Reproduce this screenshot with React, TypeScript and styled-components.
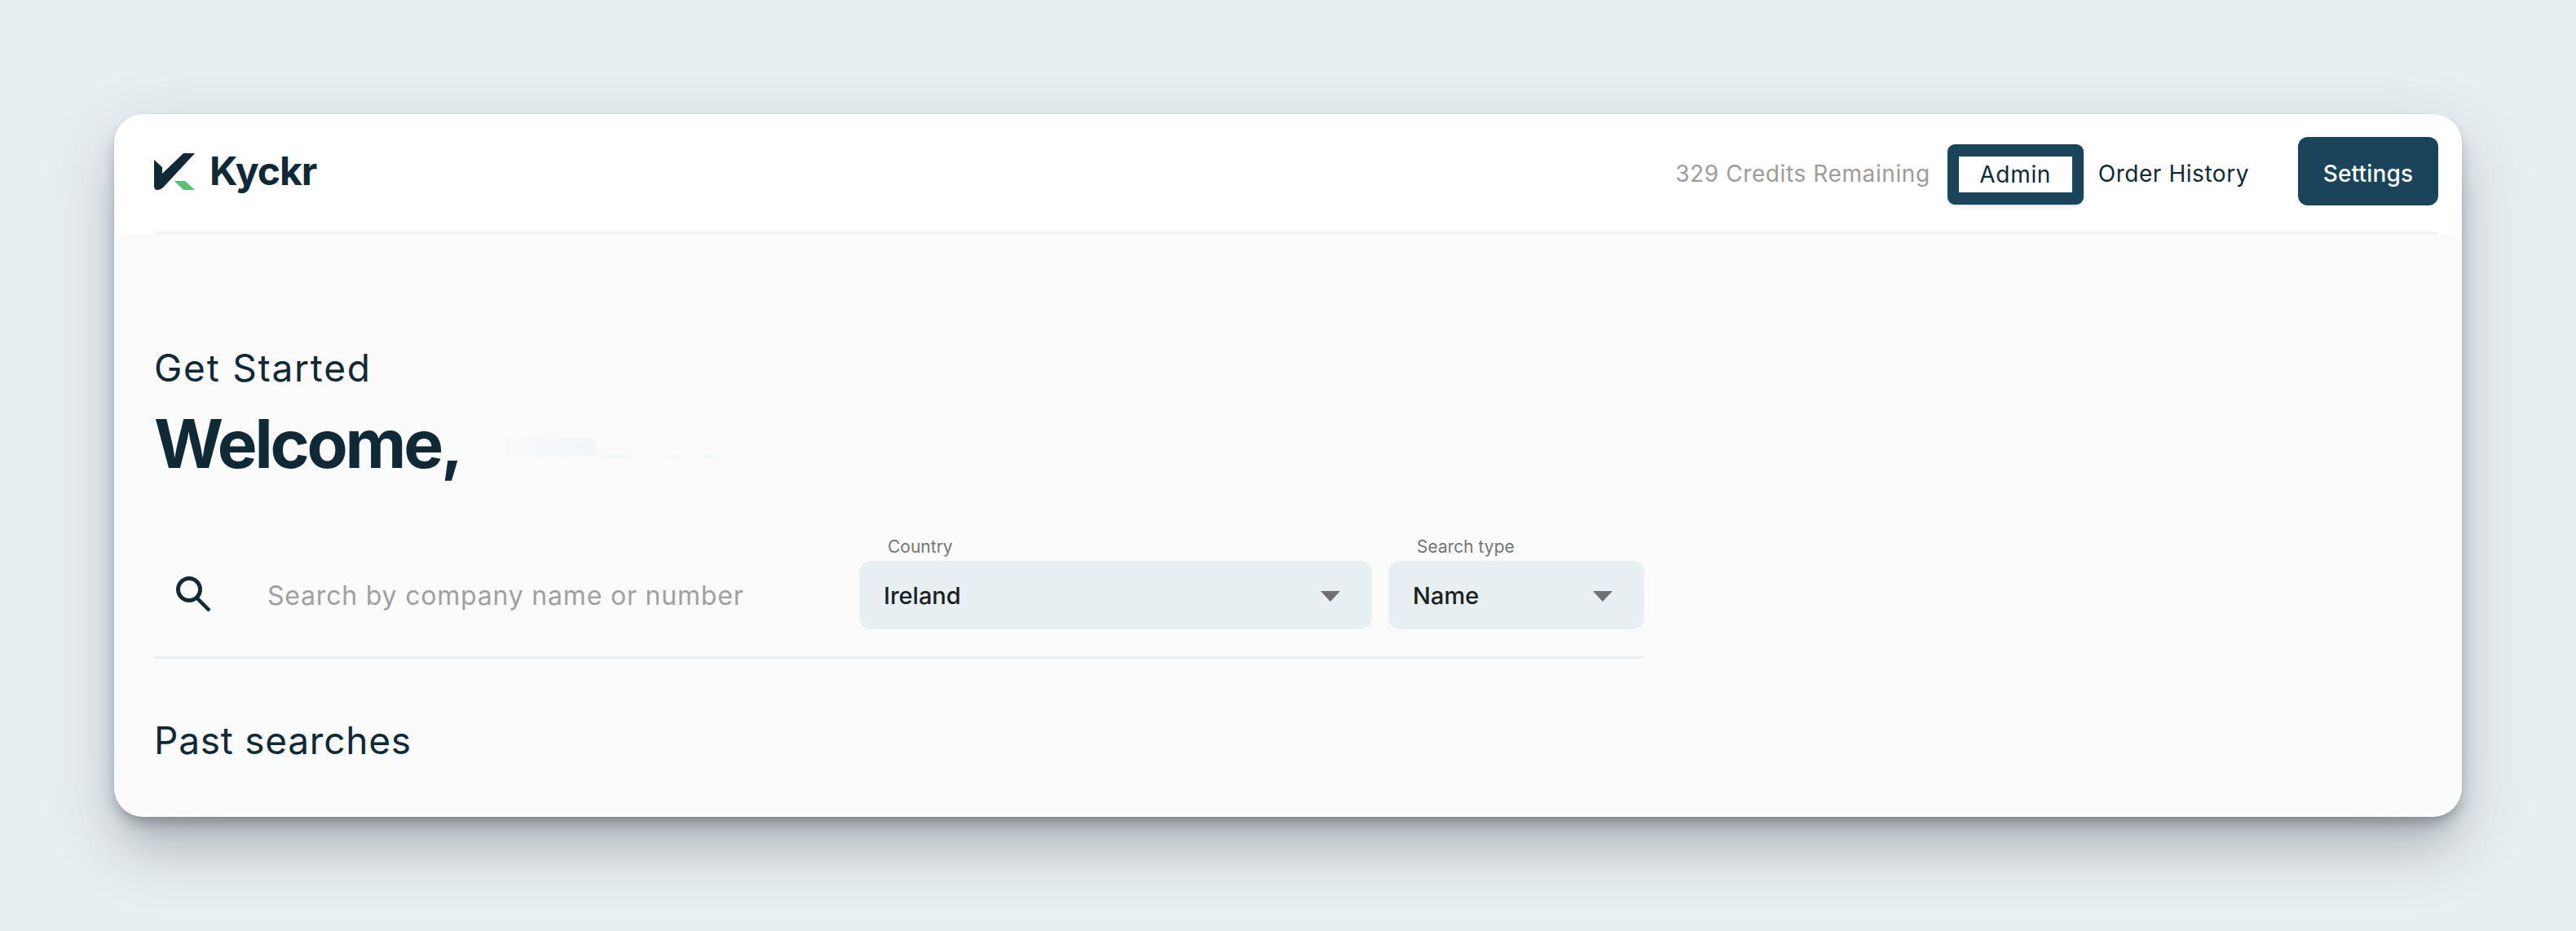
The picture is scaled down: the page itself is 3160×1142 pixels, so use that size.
import React from 'react';
import styled, { createGlobalStyle } from 'styled-components';

const GlobalStyle = createGlobalStyle`
    html, body {
        margin: 0;
        padding: 0;
        background: #e8eff2;
        font-family: Inter, "Liberation Sans", sans-serif;
    }
`;

const Page = styled.div`
    width: 3160px;
    height: 1142px;
    padding: 140px 140px 0;
    box-sizing: border-box;
    overflow: hidden;
`;

const Card = styled.main`
    width: 2880px;
    height: 862px;
    border-radius: 36px;
    background: #fbfbfb;
    overflow: hidden;
`;

const CardShadow = styled.div`
    border-radius: 36px;
    box-shadow:
        0 30px 90px rgba(30, 45, 55, 0.16),
        0 44px 60px -12px rgba(30, 45, 55, 0.2),
        0 10px 18px -4px rgba(20, 30, 35, 0.35);
`;

const Header = styled.header`
    background: #fff;
    padding: 0 29px 0 49px;
`;

const HeaderInner = styled.div`
    display: flex;
    align-items: center;
    justify-content: space-between;
    height: 144px;
    border-bottom: 3px solid #f3f4f4;
`;

const Brand = styled.div`
    display: flex;
    align-items: center;
    gap: 18px;
    margin-top: -4px;
`;

const BrandName = styled.span`
    font-size: 48px;
    font-weight: 700;
    letter-spacing: -1px;
    line-height: 1;
    color: #0f2936;
`;

const Nav = styled.nav`
    display: flex;
    align-items: center;
    margin-top: -4px;
`;

const Credits = styled.span`
    font-size: 28px;
    letter-spacing: 0.6px;
    color: #9c9c9c;
    margin-right: 21px;
    padding-top: 6px;
`;

const AdminButton = styled.button`
    width: 167px;
    height: 74px;
    margin: 8px 18px 0 0;
    padding: 0;
    box-sizing: border-box;
    background: #fff;
    border: solid #1a4459;
    border-width: 15px 14px;
    border-radius: 9px;
    box-shadow: 0 2px 5px rgba(0, 0, 0, 0.12);
    font: 400 28px Inter, sans-serif;
    letter-spacing: 0.7px;
    color: #0f2936;
`;

const NavLink = styled.a`
    font-size: 28px;
    font-weight: 400;
    letter-spacing: 0.55px;
    color: #0f2936;
    margin-right: 60px;
    padding-top: 6px;
`;

const SettingsButton = styled.button`
    width: 172px;
    height: 84px;
    padding: 6px 0 0;
    border: none;
    border-radius: 12px;
    background: #1a4459;
    font: 500 28px Inter, sans-serif;
    letter-spacing: 0.2px;
    color: #fff;
`;

const Content = styled.section`
    padding: 136px 0 0 49px;
`;

const Eyebrow = styled.h2`
    margin: 0;
    font-size: 46px;
    font-weight: 400;
    line-height: 56px;
    letter-spacing: 1.75px;
    color: #0f2936;
`;

const WelcomeRow = styled.div`
    display: flex;
    align-items: center;
    margin-top: 16px;
`;

const Welcome = styled.h1`
    margin: 0;
    font-size: 82px;
    font-weight: 700;
    line-height: 100px;
    letter-spacing: -3.2px;
    color: #0f2936;
`;

const RedactedName = styled.span`
    width: 270px;
    height: 30px;
    margin: 10px 0 0 55px;
    background:
        linear-gradient(#edf3f6, #edf3f6) 120px 24px / 33px 2px no-repeat,
        linear-gradient(#edf3f6, #edf3f6) 201px 24px / 12px 2px no-repeat,
        linear-gradient(#edf3f6, #edf3f6) 243px 24px / 17px 2px no-repeat,
        linear-gradient(90deg, #f8f9fa, #f6f8f9 40%, #f1f5f7) 0 3px / 110px 22px no-repeat;
    filter: blur(1.5px);
`;

const SearchForm = styled.div`
    display: flex;
    align-items: flex-end;
    width: 1828px;
    height: 118px;
    margin-top: 59px;
    border-bottom: 3px solid #e8eff2;
    padding-bottom: 33px;
    box-sizing: content-box;
`;

const SearchIcon = styled.svg`
    flex: none;
    width: 44px;
    height: 44px;
    margin: 0 0 21px 27px;
`;

const SearchInput = styled.input`
    flex: none;
    width: 726px;
    height: 84px;
    margin-left: 68px;
    padding: 0;
    border: none;
    outline: none;
    background: transparent;
    font: 400 32px Inter, sans-serif;
    letter-spacing: 0.8px;

    &::placeholder {
        color: #a0a0a0;
        opacity: 1;
    }
`;

const Field = styled.div<{ $width: number }>`
    flex: none;
    width: ${({ $width }) => $width}px;
    margin-right: 20px;

    &:last-child {
        margin-right: 0;
    }
`;

const FieldLabel = styled.label`
    display: block;
    height: 29px;
    padding-left: 35px;
    font-size: 21px;
    line-height: 24px;
    color: #757575;
`;

const Select = styled.div`
    display: flex;
    align-items: center;
    justify-content: space-between;
    height: 84px;
    padding: 0 39px 0 30px;
    box-sizing: border-box;
    border-radius: 14px;
    background: #e8eff2;
    font-size: 29px;
    font-weight: 500;
    color: #1a1f22;
`;

const Caret = styled.svg`
    width: 24px;
    height: 13px;
    margin-top: 3px;
    fill: #707070;
`;

const PastSearches = styled.h2`
    margin: 72px 0 0;
    font-size: 46px;
    font-weight: 400;
    line-height: 56px;
    letter-spacing: 0.75px;
    color: #0f2936;
`;

const App = () => {
    return (
        <Page>
            <GlobalStyle />
            <CardShadow>
                <Card>
                    <Header>
                        <HeaderInner>
                            <Brand>
                                <svg width="50" height="45" viewBox="0 0 50 45">
                                    <path d="M0 8 L10 17 V25 L36 0 H50 L12 41 Q8 45 4 45 Q0 45 0 40 Z" fill="#0f2936" />
                                    <path d="M25 34 H38 L50 45 H36 Z" fill="#57bd78" />
                                </svg>
                                <BrandName>Kyckr</BrandName>
                            </Brand>
                            <Nav>
                                <Credits>329 Credits Remaining</Credits>
                                <AdminButton>Admin</AdminButton>
                                <NavLink>Order History</NavLink>
                                <SettingsButton>Settings</SettingsButton>
                            </Nav>
                        </HeaderInner>
                    </Header>
                    <Content>
                        <Eyebrow>Get Started</Eyebrow>
                        <WelcomeRow>
                            <Welcome>Welcome,</Welcome>
                            <RedactedName />
                        </WelcomeRow>
                        <SearchForm>
                            <SearchIcon viewBox="0 0 44 44">
                                <circle cx="16" cy="16" r="13.5" fill="none" stroke="#0f2936" strokeWidth="5" />
                                <line x1="26" y1="27" x2="41" y2="42" stroke="#0f2936" strokeWidth="4.5" />
                            </SearchIcon>
                            <SearchInput placeholder="Search by company name or number" />
                            <Field $width={629}>
                                <FieldLabel>Country</FieldLabel>
                                <Select>
                                    Ireland
                                    <Caret viewBox="0 0 24 13"><path d="M0 0 H24 L12 13 Z" /></Caret>
                                </Select>
                            </Field>
                            <Field $width={314}>
                                <FieldLabel>Search type</FieldLabel>
                                <Select>
                                    Name
                                    <Caret viewBox="0 0 24 13"><path d="M0 0 H24 L12 13 Z" /></Caret>
                                </Select>
                            </Field>
                        </SearchForm>
                        <PastSearches>Past searches</PastSearches>
                    </Content>
                </Card>
            </CardShadow>
        </Page>
    );
};

export default App;
